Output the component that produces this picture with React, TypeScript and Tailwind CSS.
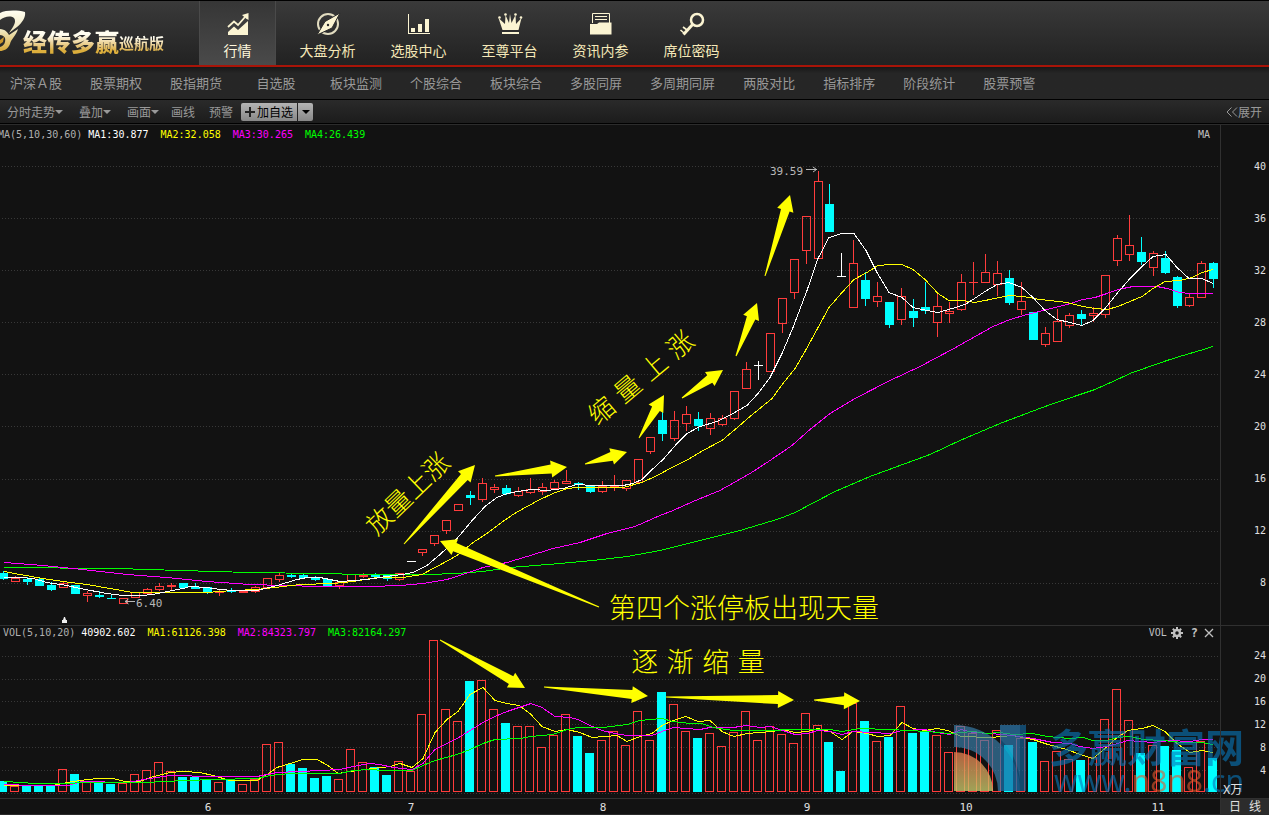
import type { ReactNode } from "react";

type Kind = "r" | "c" | "w";
type Candle = [Kind, number, number, number, number];
type Point = [number, number];

const RED = "#ff3c3c";
const CYAN = "#00ffff";
const WHITE = "#ffffff";
const YELLOW = "#ffff00";
const MAGENTA = "#ff00ff";
const GREEN = "#00ff00";

/* kind, high, body top, body bottom, low */
const candles: Candle[] = [
  ["c", 571, 573, 579, 580], ["r", 576, 578, 582, 582], ["c", 577, 579, 582, 585], ["c", 577, 579, 586, 586],
  ["c", 582, 585, 590, 591], ["r", 581, 583, 588, 588], ["c", 585, 585, 594, 594], ["r", 591, 593, 596, 602],
  ["c", 591, 595, 597, 598], ["c", 594, 598, 599, 599], ["r", 598, 598, 604, 604], ["r", 592, 592, 598, 598],
  ["r", 588, 589, 594, 594], ["r", 583, 586, 590, 591], ["r", 583, 585, 587, 590], ["c", 583, 583, 588, 588],
  ["c", 583, 587, 589, 589], ["c", 587, 587, 593, 594], ["r", 590, 591, 593, 596], ["c", 588, 590, 592, 593],
  ["r", 590, 591, 593, 593], ["r", 586, 587, 592, 593], ["r", 578, 578, 588, 589], ["r", 573, 575, 580, 582],
  ["c", 573, 575, 577, 578], ["c", 573, 575, 578, 579], ["c", 576, 577, 580, 581], ["c", 579, 579, 586, 586],
  ["r", 581, 582, 586, 589], ["r", 574, 574, 582, 582], ["r", 573, 575, 577, 578], ["c", 573, 575, 577, 577],
  ["c", 574, 574, 579, 581], ["r", 573, 573, 580, 581], ["w", 561, 561, 562, 562], ["r", 549, 549, 553, 556],
  ["r", 535, 535, 544, 546], ["r", 520, 520, 531, 534], ["r", 504, 504, 511, 511], ["c", 491, 495, 498, 505],
  ["r", 478, 483, 500, 502], ["r", 484, 487, 490, 493], ["c", 485, 488, 494, 495], ["r", 487, 491, 496, 497],
  ["r", 478, 489, 493, 494], ["r", 483, 487, 492, 495], ["r", 480, 482, 489, 489], ["r", 470, 481, 484, 484],
  ["c", 482, 483, 485, 490], ["c", 485, 485, 492, 493], ["r", 481, 486, 492, 493], ["r", 475, 486, 488, 491],
  ["r", 480, 480, 489, 491], ["r", 459, 459, 483, 483], ["r", 437, 437, 452, 454], ["c", 412, 420, 434, 441],
  ["r", 411, 420, 439, 441], ["r", 406, 414, 424, 431], ["c", 412, 419, 426, 431], ["r", 413, 418, 429, 435],
  ["r", 415, 418, 425, 426], ["r", 391, 391, 419, 420], ["r", 362, 369, 389, 389], ["w", 361, 365, 366, 380],
  ["r", 333, 333, 372, 372], ["r", 298, 298, 324, 333], ["r", 259, 259, 293, 299], ["r", 216, 216, 251, 264],
  ["r", 171, 181, 259, 259], ["c", 184, 204, 232, 232], ["w", 253, 276, 277, 277], ["r", 240, 263, 308, 308],
  ["c", 272, 280, 299, 306], ["r", 282, 296, 302, 307], ["c", 302, 302, 325, 328], ["r", 288, 296, 320, 325],
  ["c", 299, 311, 318, 327], ["c", 282, 307, 311, 314], ["r", 293, 306, 323, 337], ["r", 302, 311, 314, 323],
  ["r", 274, 282, 310, 311], ["r", 262, 282, 283, 295], ["r", 254, 272, 283, 283], ["r", 261, 273, 285, 296],
  ["c", 270, 278, 303, 305], ["r", 282, 301, 310, 315], ["c", 312, 312, 340, 340], ["r", 327, 333, 345, 347],
  ["r", 309, 321, 342, 342], ["r", 313, 315, 326, 328], ["c", 310, 314, 319, 326], ["r", 307, 313, 316, 322],
  ["r", 275, 275, 315, 318], ["r", 235, 238, 261, 266], ["r", 215, 245, 255, 261], ["c", 237, 252, 262, 265],
  ["r", 251, 253, 268, 276], ["c", 251, 258, 273, 274], ["c", 276, 277, 306, 308], ["r", 293, 297, 306, 307],
  ["r", 261, 263, 298, 298], ["c", 262, 263, 279, 288],
];

const volumeTops: number[] = [
  781, 786, 785, 785, 785, 769, 774, 781, 782, 784, 783, 774, 770, 762, 771, 777, 777, 780, 782, 779, 784, 779, 744,
  742, 764, 768, 778, 776, 779, 749, 762, 767, 775, 761, 771, 714, 640, 709, 721, 681, 680, 709, 723, 726, 726, 747,
  735, 714, 736, 753, 740, 731, 745, 711, 740, 692, 704, 731, 738, 733, 746, 732, 711, 740, 726, 734, 743, 713, 725,
  742, 771, 703, 721, 741, 737, 706, 733, 731, 735, 752, 726, 733, 740, 730, 745, 738, 742, 761, 751, 759, 760, 757,
  719, 689, 720, 753, 745, 746, 750, 767, 741, 758,
];

const volumeUp = (i: number) => (i === 34 || i === 63 ? true : i === 70 ? false : candles[i][0] === "r");

const centerOf = (i: number) => 3.5 + 12 * i - (i >= 35 ? 1 : 0) - (i >= 69 ? 1 : 0);

const ma5: Point[] = [
  [4, 577], [20, 577], [33, 578], [47, 582], [67, 585], [80, 588], [107, 593], [123, 595], [142, 595], [153, 594],
  [167, 591], [183, 588], [190, 586], [207, 587], [220, 589], [233, 590], [257, 590], [277, 585], [297, 579],
  [307, 577], [320, 577], [340, 581], [367, 579], [393, 575], [403, 574], [413, 572], [427, 565], [440, 554],
  [457, 538], [473, 519], [485, 506], [497, 497], [507, 493], [518, 491], [532, 489], [547, 490], [563, 488],
  [577, 484], [593, 485], [623, 485], [633, 483], [642, 479], [650, 471], [663, 459], [677, 443], [687, 433],
  [700, 426], [717, 421], [733, 413], [747, 405], [758, 393], [770, 377], [782, 353], [793, 327], [807, 290],
  [818, 258], [829, 237], [842, 233], [854, 233], [866, 250], [877, 272], [889, 292], [902, 297], [913, 307],
  [927, 310], [938, 312], [952, 308], [965, 304], [973, 299], [985, 291], [997, 284], [1009, 282], [1022, 287],
  [1033, 297], [1045, 310], [1057, 319], [1070, 322], [1082, 325], [1093, 320], [1105, 308], [1117, 293],
  [1130, 278], [1142, 266], [1153, 256], [1166, 254], [1177, 267], [1189, 278], [1202, 278], [1213, 283],
];
const ma10: Point[] = [
  [4, 571], [20, 574], [43, 578], [63, 581], [87, 584], [110, 588], [133, 592], [157, 592], [207, 592], [233, 590],
  [257, 589], [283, 586], [300, 584], [333, 583], [353, 581], [377, 577], [403, 577], [422, 574], [435, 567],
  [450, 559], [460, 553], [473, 542], [487, 533], [500, 523], [513, 514], [527, 506], [540, 499], [553, 493],
  [567, 488], [577, 487], [623, 487], [642, 482], [657, 475], [672, 467], [688, 459], [703, 450], [722, 440],
  [735, 429], [750, 416], [772, 398], [783, 383], [795, 368], [805, 351], [817, 329], [829, 307], [842, 292],
  [854, 279], [867, 272], [878, 265], [890, 264], [902, 264], [913, 269], [925, 279], [938, 293], [949, 300],
  [963, 300], [975, 302], [990, 299], [1009, 295], [1023, 296], [1040, 299], [1067, 302], [1083, 306], [1095, 308],
  [1107, 309], [1118, 306], [1130, 301], [1142, 296], [1153, 288], [1165, 281], [1180, 280], [1192, 277],
  [1202, 272], [1213, 269],
];
const ma30: Point[] = [
  [4, 562], [43, 565], [83, 569], [127, 574], [167, 577], [207, 581], [250, 584], [283, 585], [320, 586], [370, 586],
  [400, 585], [423, 583], [447, 579], [463, 574], [483, 567], [507, 562], [527, 556], [553, 548], [580, 542],
  [607, 533], [635, 526], [660, 515], [673, 510], [693, 501], [720, 490], [750, 473], [770, 460], [792, 445],
  [810, 429], [830, 413], [855, 398], [890, 380], [920, 366], [952, 349], [993, 326], [1010, 319], [1027, 314],
  [1047, 309], [1067, 304], [1083, 299], [1095, 297], [1107, 293], [1118, 289], [1133, 286], [1157, 286],
  [1167, 288], [1180, 292], [1190, 293], [1213, 293],
];
const ma60: Point[] = [
  [4, 567], [117, 568], [180, 570], [250, 572], [320, 573], [363, 574], [427, 574], [457, 573], [483, 571],
  [510, 567], [560, 563], [593, 560], [627, 556], [660, 550], [700, 540], [740, 530], [780, 518], [795, 512],
  [835, 491], [870, 476], [900, 465], [930, 454], [960, 440], [1000, 423], [1045, 406], [1080, 394], [1095, 389],
  [1113, 381], [1130, 373], [1147, 367], [1167, 360], [1183, 355], [1200, 350], [1213, 346],
];

const volMa5: Point[] = [
  [4, 785], [53, 785], [67, 782], [80, 780], [97, 778], [113, 778], [125, 781], [140, 781], [150, 777], [170, 772],
  [183, 771], [200, 772], [213, 775], [230, 780], [257, 780], [267, 774], [277, 767], [290, 763], [303, 759],
  [317, 759], [328, 765], [338, 773], [350, 771], [373, 768], [390, 766], [400, 763], [412, 767], [423, 758],
  [435, 732], [447, 719], [458, 711], [470, 694], [483, 687], [495, 700], [507, 703], [519, 705], [530, 713],
  [542, 726], [555, 731], [567, 729], [580, 732], [592, 737], [617, 735], [627, 741], [640, 736], [652, 733],
  [662, 725], [673, 720], [686, 716], [698, 721], [710, 720], [722, 731], [734, 736], [747, 733], [772, 731],
  [783, 729], [795, 732], [807, 731], [818, 728], [830, 731], [842, 739], [853, 731], [867, 733], [878, 736],
  [890, 735], [902, 722], [913, 728], [925, 730], [937, 728], [948, 730], [961, 736], [990, 737], [1013, 735],
  [1033, 739], [1048, 744], [1067, 749], [1080, 754], [1093, 758], [1105, 748], [1117, 737], [1128, 730],
  [1142, 728], [1153, 725], [1165, 731], [1177, 743], [1190, 752], [1202, 750], [1213, 752],
];
const volMa10: Point[] = [
  [4, 784], [33, 785], [68, 785], [82, 781], [127, 782], [150, 778], [170, 775], [213, 776], [257, 776], [277, 772],
  [300, 771], [340, 769], [353, 766], [370, 763], [380, 764], [393, 767], [412, 769], [423, 763], [435, 749],
  [457, 738], [470, 730], [483, 722], [495, 716], [507, 711], [519, 707], [531, 703], [542, 707], [555, 716],
  [570, 717], [578, 719], [590, 725], [602, 730], [615, 733], [627, 735], [652, 735], [662, 731], [673, 727],
  [700, 729], [710, 727], [733, 727], [747, 725], [760, 727], [770, 726], [783, 730], [795, 734], [807, 733],
  [818, 730], [830, 731], [842, 734], [853, 731], [890, 733], [902, 730], [925, 729], [937, 732], [950, 734],
  [961, 729], [973, 732], [990, 733], [1013, 735], [1033, 738], [1053, 742], [1070, 743], [1080, 746], [1093, 748],
  [1107, 746], [1128, 740], [1153, 742], [1170, 740], [1190, 741], [1202, 739], [1213, 739],
];
const volMa20: Point[] = [
  [4, 781], [22, 782], [33, 783], [67, 783], [83, 782], [147, 782], [163, 781], [187, 780], [213, 779], [257, 778],
  [270, 775], [290, 773], [340, 773], [353, 770], [370, 769], [383, 770], [412, 770], [423, 765], [435, 760],
  [457, 754], [470, 749], [483, 743], [495, 739], [520, 738], [531, 736], [553, 734], [567, 729], [578, 727],
  [603, 727], [627, 724], [640, 720], [662, 718], [673, 721], [690, 723], [702, 723], [713, 727], [733, 730],
  [830, 729], [842, 731], [860, 728], [890, 729], [927, 731], [950, 733], [973, 731], [987, 733], [1000, 732],
  [1013, 734], [1033, 733], [1047, 736], [1070, 738], [1083, 737], [1093, 740], [1107, 740], [1117, 737],
  [1130, 736], [1143, 739], [1163, 740], [1183, 742], [1202, 742], [1213, 744],
];

const priceGrid = [166, 218, 270, 322, 374, 426, 479, 531, 583];
const volumeGrid = [656, 679, 701, 724, 747, 770, 793];

const priceArrows: [Point, Point][] = [
  [[404, 544], [475, 465]],
  [[495, 476], [567, 467]],
  [[585, 464], [627, 452]],
  [[639, 438], [664, 395]],
  [[682, 398], [723, 370]],
  [[736, 356], [757, 303]],
  [[765, 276], [790, 195]],
  [[599, 607], [440, 541]],
];
const volumeArrows: [Point, Point][] = [
  [[440, 640], [525, 688]],
  [[544, 687], [648, 696]],
  [[666, 697], [794, 700]],
  [[814, 700], [860, 701]],
];

function Arrow({ from, to }: { from: Point; to: Point }) {
  const dx = to[0] - from[0];
  const dy = to[1] - from[1];
  const len = Math.hypot(dx, dy);
  const ux = dx / len;
  const uy = dy / len;
  const at = (along: number, side: number) =>
    `${(from[0] + ux * along - uy * side).toFixed(1)},${(from[1] + uy * along + ux * side).toFixed(1)}`;
  const neck = len - 16;
  const points = [
    at(0, -0.5), at(neck, -4.5), at(neck, -8.5), at(len, 0), at(neck, 8.5), at(neck, 4.5), at(0, 0.5),
  ].join(" ");
  return <polygon points={points} fill={YELLOW} />;
}

function Line({ points, color }: { points: Point[]; color: string }) {
  return (
    <polyline
      points={points.map(([x, y]) => `${x},${y + 0.5}`).join(" ")}
      fill="none"
      stroke={color}
      strokeWidth="1"
      shapeRendering="crispEdges"
    />
  );
}

function Grid({ rows }: { rows: number[] }) {
  return (
    <g stroke="#383838" strokeDasharray="1 2" shapeRendering="crispEdges">
      {rows.map((y) => (
        <line key={y} x1="2" x2="1219" y1={y + 0.5} y2={y + 0.5} />
      ))}
    </g>
  );
}

function CandleShape({ candle, x }: { candle: Candle; x: number }) {
  const [kind, high, top, bottom, low] = candle;
  const color = kind === "r" ? RED : kind === "c" ? CYAN : WHITE;
  const hollow = kind === "r" && bottom - top > 2;
  return (
    <g stroke={color} shapeRendering="crispEdges">
      {high < top && <line x1={x} x2={x} y1={high} y2={top} />}
      {low > bottom && <line x1={x} x2={x} y1={bottom} y2={low} />}
      {hollow ? (
        <rect x={x - 4} y={top + 0.5} width="8" height={bottom - top - 1} fill="none" />
      ) : (
        <rect x={x - 4.5} y={top} width="9" height={Math.max(1, bottom - top)} fill={color} stroke="none" />
      )}
    </g>
  );
}

function PriceChart() {
  return (
    <svg
      className="block h-[480px] w-full overflow-visible"
      viewBox="0 145 1220 480"
      preserveAspectRatio="xMinYMin meet"
      role="img"
      aria-label="日线"
    >
      <Grid rows={priceGrid} />
      {candles.map((candle, i) => (
        <CandleShape key={i} candle={candle} x={centerOf(i)} />
      ))}
      <Line points={ma60} color={GREEN} />
      <Line points={ma30} color={MAGENTA} />
      <Line points={ma10} color={YELLOW} />
      <Line points={ma5} color={WHITE} />
      <g fill="#b8b8b8" className="font-['DejaVu_Sans_Mono',monospace] text-[11px]">
        <text x="770" y="175">39.59</text>
        <text x="136" y="607">6.40</text>
      </g>
      <g fill="none" stroke="#b8b8b8">
        <path d="M806 169.500H817M813 167L816.500 169.500L813 172" />
        <path d="M125 601.500H135M128.500 599L125 601.500L128.500 604" />
      </g>
      <path d="M64 617h1l1 3h1v3h-5v-3h1z" fill="#f0f0f0" />
      {priceArrows.map(([from, to], i) => (
        <Arrow key={i} from={from} to={to} />
      ))}
      <g
        fill={YELLOW}
        className="font-['DejaVu_Sans','Noto_Sans_CJK_SC',sans-serif] font-light"
        textAnchor="middle"
      >
        <text transform="translate(408 494) rotate(-44)" y="9" className="text-[26px]">放量上涨</text>
        <text transform="translate(641 378) rotate(-40)" y="9" className="text-[26px]">缩 量 上 涨</text>
        <text x="744" y="618" className="text-[27px]">第四个涨停板出现天量</text>
      </g>
    </svg>
  );
}

function VolumeChart() {
  return (
    <svg
      className="block h-[158px] w-full overflow-visible"
      viewBox="0 640 1220 158"
      preserveAspectRatio="xMinYMin meet"
      role="img"
      aria-label="VOL"
    >
      <Grid rows={volumeGrid} />
      <g shapeRendering="crispEdges">
        {volumeTops.map((top, i) => {
          const x = centerOf(i) - 1;
          return volumeUp(i) ? (
            <rect key={i} x={x - 4} y={top + 0.5} width="8" height={791 - top} fill="none" stroke={RED} />
          ) : (
            <rect key={i} x={x - 4.5} y={top} width="9" height={792 - top} fill={CYAN} />
          );
        })}
      </g>
      <Line points={volMa5} color={YELLOW} />
      <Line points={volMa10} color={MAGENTA} />
      <Line points={volMa20} color={GREEN} />
      {volumeArrows.map(([from, to], i) => (
        <Arrow key={i} from={from} to={to} />
      ))}
      <text
        x="698"
        y="672"
        textAnchor="middle"
        fill={YELLOW}
        className="font-['DejaVu_Sans','Noto_Sans_CJK_SC',sans-serif] text-[27px] font-light"
      >
        逐 渐 缩 量
      </text>
      <defs>
        <linearGradient id="sun" x1="0" y1="0" x2="0" y2="1">
          <stop offset="0" stopColor="#e0784c" />
          <stop offset="1" stopColor="#c8cc6c" />
        </linearGradient>
      </defs>
      <g opacity="0.78">
        <path d="M954 725A66 66 0 0 1 1020 791H998A44 44 0 0 0 954 747Z" fill="#3a80ae" opacity="0.85" />
        <path d="M954 752A39 39 0 0 1 993 791H954Z" fill="url(#sun)" />
        <path d="M1000 725H1026V791H1001Z" fill="#146aa4" opacity="0.8" />
        <path d="M1000 725H1020V780C1018 762 1010 748 1000 739Z" fill="#3f86b8" opacity="0.5" />
      </g>
      <g opacity="0.6">
        <text
          x="1049"
          y="762"
          fill="#0878bc"
          className="font-['Noto_Sans_CJK_SC',sans-serif] text-[39px] font-bold"
        >
          多赢财富网
        </text>
        <text x="1054" y="792" fill="#0878bc" className="font-['Noto_Sans',sans-serif] text-[30px]">
          www.<tspan fill="#e8582c">n8n8</tspan>.cn
        </text>
      </g>
    </svg>
  );
}

const iconFill = "#fbf4d2";

const navItems: { label: string; icon: ReactNode }[] = [
  {
    label: "行情",
    icon: (
      <>
        <path d="M2 23V20L8 14.500L12 18L22 9V23Z" fill={iconFill} />
        <path d="M2 15L8 9.500L12 13L19 5" fill="none" stroke={iconFill} strokeWidth="1.800" />
        <path d="M16 3L22.500 1V8L20 6.500Z" fill={iconFill} />
      </>
    ),
  },
  {
    label: "大盘分析",
    icon: (
      <>
        <circle cx="12" cy="12" r="10" fill="none" stroke="#e2dcc0" strokeWidth="2" />
        <path d="M24 1L16 16L1 23L9 9.500Z" fill={iconFill} stroke="#2b2b2b" strokeWidth="1" />
        <circle cx="12" cy="13" r="1.200" fill="#2b2b2b" />
      </>
    ),
  },
  {
    label: "选股中心",
    icon: (
      <>
        <path d="M1.500 2V21.500H23" fill="none" stroke={iconFill} strokeWidth="1" shapeRendering="crispEdges" />
        <path d="M4 16H8V20H4ZM11 12H15V20H11ZM18 7H22V20H18Z" fill={iconFill} />
      </>
    ),
  },
  {
    label: "至尊平台",
    icon: (
      <>
        <path d="M4.500 18L0.500 6L7 12L7.500 3L11 11L12 2L13.500 11L17.500 3L18 12L23.500 6L20.500 18Z" fill={iconFill} />
        <path d="M4 20H21V22H4Z" fill={iconFill} />
        <circle cx="1.500" cy="5.500" r="1.300" fill={iconFill} />
        <circle cx="7.500" cy="2.500" r="1.300" fill={iconFill} />
        <circle cx="17.500" cy="2.500" r="1.300" fill={iconFill} />
        <circle cx="23" cy="5.500" r="1.300" fill={iconFill} />
      </>
    ),
  },
  {
    label: "资讯内参",
    icon: (
      <>
        <path d="M3.500 11V1.500H20.500V11" fill="none" stroke={iconFill} strokeWidth="1" />
        <path d="M6 4.500H18M6 7.500H18" stroke={iconFill} strokeWidth="1" />
        <path d="M1 12H8L10 10.500H22.500V22.500H1Z" fill={iconFill} />
      </>
    ),
  },
  {
    label: "席位密码",
    icon: (
      <>
        <circle cx="17" cy="8" r="6" fill="none" stroke={iconFill} strokeWidth="2.500" />
        <path d="M13 12L3.500 22.500" stroke={iconFill} strokeWidth="3" />
        <path d="M7 18L3 15M4 21L0.500 18" stroke={iconFill} strokeWidth="1.600" />
      </>
    ),
  },
];

const subItems = [
  "沪深Ａ股", "股票期权", "股指期货", "自选股", "板块监测", "个股综合", "板块综合", "多股同屏", "多周期同屏",
  "两股对比", "指标排序", "阶段统计", "股票预警",
];

function Caret({ className }: { className: string }) {
  return (
    <svg className={className} viewBox="0 0 8 4" aria-hidden="true">
      <path d="M0 0H8L4 4Z" fill="currentColor" />
    </svg>
  );
}

function Logo() {
  return (
    <div className="flex h-full w-[199px] shrink-0 items-end pb-2">
      <svg className="mb-1 h-[44px] w-[25px] shrink-0 overflow-visible" viewBox="0 13 25 44" aria-hidden="true">
        <defs>
          <linearGradient id="gold" gradientUnits="userSpaceOnUse" x1="0" y1="15" x2="0" y2="55">
            <stop offset="0" stopColor="#fffdf0" />
            <stop offset="0.5" stopColor="#efe6bc" />
            <stop offset="1" stopColor="#d8a838" />
          </linearGradient>
        </defs>
        <path
          d="M0 17C6 14 17 14 25 16C26 21 22 27 17 31L9 37C13 31 17 26 14 22C10 19 4 21 0 24Z"
          fill="url(#gold)"
        />
        <path
          d="M0 33C5 33 8 37 9 39L18 33C16 40 11 43 10 48C8 53 4 55 0 55V51C4 50 6 46 5 42C4 40 2 39 0 39Z"
          fill="url(#gold)"
        />
        <path d="M0 44L4 41L3 46L0 48Z" fill="#c9962c" />
      </svg>
      <span className="-ml-0.5 bg-linear-to-b from-[#fffdf0] from-30% to-[#dcae3c] to-80% bg-clip-text font-['Noto_Sans_CJK_SC',sans-serif] text-2xl leading-8 font-black whitespace-nowrap text-transparent">
        经传多赢
      </span>
      <span className="bg-linear-to-b from-[#fffdf0] from-30% to-[#dcae3c] to-80% bg-clip-text font-['Noto_Sans_CJK_SC',sans-serif] text-[15px] leading-7 font-bold whitespace-nowrap text-transparent">
        巡航版
      </span>
    </div>
  );
}

function Header() {
  return (
    <header className="flex h-[67px] overflow-hidden border-t border-b-2 border-t-black border-b-[#a81408] bg-linear-to-b from-[#3a3a3a] to-[#222222]">
      <Logo />
      <nav className="flex">
        {navItems.map((item, i) => (
          <button
            key={item.label}
            type="button"
            className={
              i === 0
                ? "mr-1.5 flex w-[77px] flex-col items-center gap-1 border-x border-[#4a4a4a] bg-linear-to-b from-[#363636] to-[#4a4a4a] pt-[11px] text-sm leading-5 text-[#fff8dc]"
                : "flex w-[91px] flex-col items-center gap-1 pt-[11px] text-sm leading-5 text-[#f5e8b8]"
            }
          >
            <svg className="size-6 overflow-visible" viewBox="0 0 24 24" aria-hidden="true">
              {item.icon}
            </svg>
            {item.label}
          </button>
        ))}
      </nav>
    </header>
  );
}

function SubNav() {
  return (
    <nav className="flex h-8 overflow-hidden bg-linear-to-b from-[#181818] to-[#262626] to-20%">
      <div className="-ml-1 flex">
        {subItems.map((item) => (
          <a
            key={item}
            href="#"
            className="flex min-w-20 items-center justify-center px-[14px] text-[13px] leading-5 whitespace-nowrap text-[#999999]"
          >
            {item}
          </a>
        ))}
      </div>
    </nav>
  );
}

function Toolbar() {
  return (
    <div className="flex h-[25px] items-center border-y border-t-black border-b-black bg-linear-to-b from-[#2a2a2a] to-[#1c1c1c] pl-[7px] text-xs text-[#999999]">
      <button type="button" className="mr-4 flex items-center">
        分时走势
        <Caret className="h-1 w-2" />
      </button>
      <button type="button" className="mr-4 flex items-center">
        叠加
        <Caret className="h-1 w-2" />
      </button>
      <button type="button" className="mr-3 flex items-center">
        画面
        <Caret className="h-1 w-2" />
      </button>
      <button type="button" className="mr-[14px]">画线</button>
      <button type="button" className="mr-2">预警</button>
      <button
        type="button"
        className="flex h-[18px] w-14 items-center justify-center gap-0.5 rounded-l-xs bg-linear-to-b from-[#b4b4b4] to-[#888888] text-black"
      >
        <svg className="size-[10px]" viewBox="0 0 10 10" aria-hidden="true">
          <path d="M5 0V10M0 5H10" stroke="#222222" strokeWidth="2" />
        </svg>
        加自选
      </button>
      <button
        type="button"
        aria-label="加自选"
        className="ml-px flex h-[18px] w-[15px] items-center justify-center rounded-r-xs bg-linear-to-b from-[#b4b4b4] to-[#888888] text-black"
      >
        <Caret className="h-1 w-2" />
      </button>
      <button type="button" className="mr-[7px] ml-auto flex items-center">
        <svg className="h-[10px] w-3" viewBox="0 0 12 10" aria-hidden="true">
          <path d="M5.500 0.500L1 5L5.500 9.500M11 0.500L6.500 5L11 9.500" fill="none" stroke="currentColor" />
        </svg>
        展开
      </button>
    </div>
  );
}

function PriceLegend() {
  return (
    <div className="flex h-5 items-center overflow-hidden font-['DejaVu_Sans_Mono',monospace] text-[10px] leading-4 whitespace-nowrap">
      <span className="-ml-0.5 mr-1.5 text-[#b0b0b0]">MA(5,10,30,60)</span>
      <div className="flex gap-3">
        <span className="text-white">MA1:30.877</span>
        <span className="text-[#ffff00]">MA2:32.058</span>
        <span className="text-[#ff00ff]">MA3:30.265</span>
        <span className="text-[#00ff00]">MA4:26.439</span>
      </div>
      <span className="mr-[10px] ml-auto text-[#c0c0c0]">MA</span>
    </div>
  );
}

function VolumeLegend() {
  return (
    <div className="flex h-[14px] items-center font-['DejaVu_Sans_Mono',monospace] text-[10px] leading-3 whitespace-nowrap">
      <span className="mr-1.5 ml-[3px] text-[#b0b0b0]">VOL(5,10,20)</span>
      <div className="flex gap-3">
        <span className="text-white">40902.602</span>
        <span className="text-[#ffff00]">MA1:61126.398</span>
        <span className="text-[#ff00ff]">MA2:84323.797</span>
        <span className="text-[#00ff00]">MA3:82164.297</span>
      </div>
      <div className="mr-1.5 ml-auto flex items-center text-[#c0c0c0]">
        <span>VOL</span>
        <button type="button" aria-label="设置" className="ml-1">
          <svg className="block size-3" viewBox="0 0 12 12" aria-hidden="true">
            <circle cx="6" cy="6" r="3" fill="none" stroke="currentColor" strokeWidth="2.500" />
            <path
              d="M6 0V2.500M6 9.500V12M0 6H2.500M9.500 6H12M1.800 1.800L3.500 3.500M8.500 8.500L10.200 10.200M10.200 1.800L8.500 3.500M3.500 8.500L1.800 10.200"
              stroke="currentColor"
              strokeWidth="2"
            />
          </svg>
        </button>
        <button type="button" className="ml-2 text-xs leading-3 font-bold">?</button>
        <button type="button" aria-label="关闭" className="ml-1.5">
          <svg className="block size-[10px]" viewBox="0 0 10 10" aria-hidden="true">
            <path d="M1 1L9 9M9 1L1 9" stroke="currentColor" strokeWidth="1.300" />
          </svg>
        </button>
      </div>
    </div>
  );
}

export default function App() {
  return (
    <div className="flex min-h-screen flex-col overflow-hidden bg-[#121212] font-['Noto_Sans_CJK_SC',sans-serif]">
      <Header />
      <SubNav />
      <Toolbar />
      <main className="flex border-t border-[#2c2c2c]">
        <div className="min-w-0 flex-1">
          <section className="h-[500px]">
            <PriceLegend />
            <PriceChart />
          </section>
          <section className="h-[173px] border-t border-[#303030]">
            <VolumeLegend />
            <VolumeChart />
          </section>
          <div className="h-4 border-t border-[#303030]">
            <svg
              className="block h-[14px] w-full"
              viewBox="0 799 1220 14"
              preserveAspectRatio="xMinYMin meet"
              role="img"
              aria-label="6 – 11"
            >
              <g
                fill="#e0e0e0"
                textAnchor="middle"
                className="font-['DejaVu_Sans_Mono',monospace] text-[11px]"
              >
                <text x="208" y="811">6</text>
                <text x="411" y="811">7</text>
                <text x="603" y="811">8</text>
                <text x="807" y="811">9</text>
                <text x="966" y="811">10</text>
                <text x="1158" y="811">11</text>
              </g>
            </svg>
          </div>
        </div>
        <aside className="flex w-[49px] shrink-0 flex-col border-l border-[#303030] text-right font-['DejaVu_Sans_Mono','Noto_Sans_CJK_SC',monospace] text-[10px] text-[#e0e0e0]">
          <div className="h-[500px] pt-4 pr-[3px]">
            {[40, 36, 32, 28, 24, 20, 16, 12, 8].map((v) => (
              <div key={v} className="h-[52px] leading-[52px]">{v}</div>
            ))}
          </div>
          <div className="h-[173px] border-t border-[#303030] pt-[18px] pr-[3px]">
            {[24, 20, 16, 12, 8, 4].map((v) => (
              <div key={v} className="h-[23px] leading-[23px]">{v}</div>
            ))}
            <div className="pl-0.5 text-left text-xs leading-4">X万</div>
          </div>
          <button
            type="button"
            className="flex h-4 items-center justify-between border-t border-[#303030] bg-[#2c2c2c] px-2 text-xs leading-3"
          >
            <span>日</span>
            <span>线</span>
          </button>
        </aside>
      </main>
      <div className="mt-auto h-0.5 bg-[#2a2a2a]" />
    </div>
  );
}
